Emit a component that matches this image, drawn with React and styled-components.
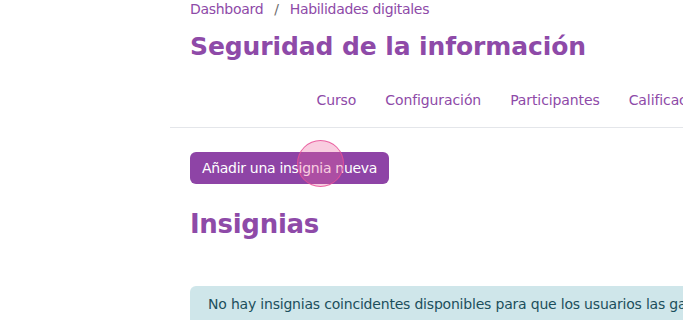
import React from "react";
import styled, { createGlobalStyle } from "styled-components";

const Global = createGlobalStyle`
  html, body { margin: 0; padding: 0; background: #fff; overflow: hidden; }
  body { font-family: "DejaVu Sans", "Noto Sans", sans-serif; width: 683px; height: 320px; }
`;

const Page = styled.div`
  width: 683px;
  height: 320px;
  overflow: hidden;
  padding-left: 170px;
  box-sizing: border-box;
`;

const Inner = styled.div`
  width: 930px;
`;

const Header = styled.header`
  padding: 0 20px;
`;

const Breadcrumb = styled.nav`
  display: flex;
  align-items: center;
  gap: 11px;
  height: 18px;
  font-size: 14px;
  color: #8e4aa8;
  letter-spacing: -0.3px;
`;

const Sep = styled.span`
  color: #6c6c6c;
`;

const Title = styled.h1`
  margin: 14px 0 0;
  font-size: 25px;
  line-height: 30px;
  font-weight: 700;
  color: #8e4aa8;
  letter-spacing: -0.1px;
`;

const SecNav = styled.ul`
  list-style: none;
  margin: 24px 0 0 -20px;
  padding: 0 0 0 132px;
  display: flex;
  height: 41px;
  border-bottom: 1px solid #e4e6ea;
`;

const NavItem = styled.li`
  padding: 0 14.5px;
  font-size: 14px;
  color: #8e4aa8;
  height: 28px;
  line-height: 28px;
  white-space: nowrap;
  letter-spacing: -0.1px;
`;

const Main = styled.main`
  padding: 24px 20px 0;
`;

const ButtonWrap = styled.div`
  position: relative;
  display: inline-block;
`;

const Button = styled.button`
  height: 32px;
  width: 199px;
  border: none;
  border-radius: 6px;
  background: #8e44a6;
  color: #fff;
  font-family: inherit;
  font-size: 14px;
  letter-spacing: -0.3px;
  padding: 0 10px;
  white-space: nowrap;
  cursor: pointer;
`;

const ClickMark = styled.span`
  position: absolute;
  left: 107px;
  top: -12px;
  width: 45px;
  height: 45px;
  border-radius: 50%;
  border: 1.5px solid rgba(232, 80, 150, 0.85);
  background: rgba(236, 100, 160, 0.32);
  pointer-events: none;
`;

const Heading = styled.h2`
  margin: 22px 0 0;
  font-size: 26px;
  line-height: 36px;
  font-weight: 700;
  color: #8e4aa8;
  letter-spacing: -0.3px;
`;

const Alert = styled.div`
  margin-top: 44px;
  background: #cfe6ea;
  border-radius: 6px;
  padding: 8px 18px 0;
  height: 60px;
  font-size: 14px;
  line-height: 20px;
  color: #1c4f5c;
  letter-spacing: -0.2px;
  white-space: nowrap;
`;

export default function App() {
  return (
    <>
      <Global />
      <Page>
        <Inner>
          <Header>
            <Breadcrumb>
              <span>Dashboard</span>
              <Sep>/</Sep>
              <span>Habilidades digitales</span>
            </Breadcrumb>
            <Title>Seguridad de la información</Title>
            <SecNav>
              <NavItem>Curso</NavItem>
              <NavItem>Configuración</NavItem>
              <NavItem>Participantes</NavItem>
              <NavItem>Calificaciones</NavItem>
              <NavItem>Informes</NavItem>
            </SecNav>
          </Header>
          <Main>
            <ButtonWrap>
              <Button>Añadir una insignia nueva</Button>
              <ClickMark />
            </ButtonWrap>
            <Heading>Insignias</Heading>
            <Alert>No hay insignias coincidentes disponibles para que los usuarios las ganen.</Alert>
          </Main>
        </Inner>
      </Page>
    </>
  );
}
